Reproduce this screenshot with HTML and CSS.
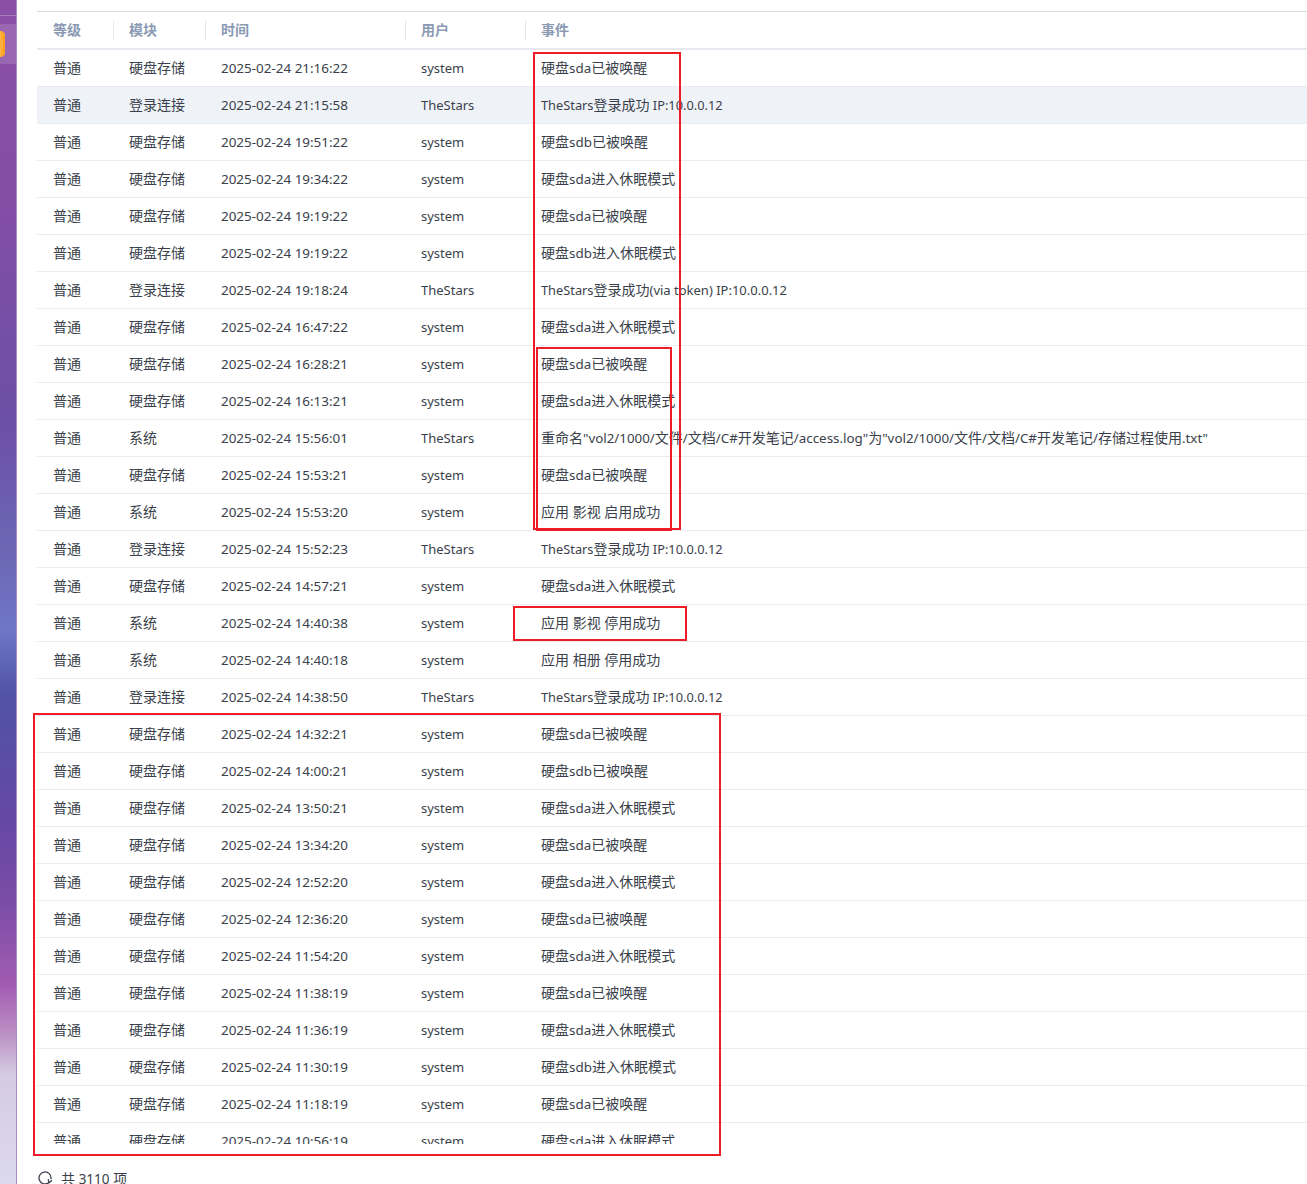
FILE: index.html
```html
<!DOCTYPE html>
<html lang="zh-CN">
<head>
<meta charset="utf-8">
<title>日志</title>
<link rel="stylesheet" href="styles.css">
</head>
<body>
<div class="page">
  <aside class="sidebar">
    <div class="side-line"></div>
    <div class="side-active"><span class="app-icon"></span></div>
  </aside>
  <main class="content">
    <div class="table-wrap">
      <table class="log-table">
        <colgroup><col class="c1"><col class="c2"><col class="c3"><col class="c4"><col></colgroup>
        <thead>
          <tr><th><span class="th-in">等级</span></th><th><span class="th-in">模块</span></th><th><span class="th-in">时间</span></th><th><span class="th-in">用户</span></th><th><span class="th-in">事件</span></th></tr>
        </thead>
        <tbody>
          <tr><td>普通</td><td>硬盘存储</td><td class="time">2025-02-24 21:16:22</td><td class="user">system</td><td>硬盘<span class="dev">sda</span>已被唤醒</td></tr>
          <tr class="hover"><td>普通</td><td>登录连接</td><td class="time">2025-02-24 21:15:58</td><td class="user">TheStars</td><td><span class="lat">TheStars</span>登录成功<span class="lat"> IP:10.0.0.12</span></td></tr>
          <tr><td>普通</td><td>硬盘存储</td><td class="time">2025-02-24 19:51:22</td><td class="user">system</td><td>硬盘<span class="dev">sdb</span>已被唤醒</td></tr>
          <tr><td>普通</td><td>硬盘存储</td><td class="time">2025-02-24 19:34:22</td><td class="user">system</td><td>硬盘<span class="dev">sda</span>进入休眠模式</td></tr>
          <tr><td>普通</td><td>硬盘存储</td><td class="time">2025-02-24 19:19:22</td><td class="user">system</td><td>硬盘<span class="dev">sda</span>已被唤醒</td></tr>
          <tr><td>普通</td><td>硬盘存储</td><td class="time">2025-02-24 19:19:22</td><td class="user">system</td><td>硬盘<span class="dev">sdb</span>进入休眠模式</td></tr>
          <tr><td>普通</td><td>登录连接</td><td class="time">2025-02-24 19:18:24</td><td class="user">TheStars</td><td><span class="lat">TheStars</span>登录成功<span class="via">(via token) IP:10.0.0.12</span></td></tr>
          <tr><td>普通</td><td>硬盘存储</td><td class="time">2025-02-24 16:47:22</td><td class="user">system</td><td>硬盘<span class="dev">sda</span>进入休眠模式</td></tr>
          <tr><td>普通</td><td>硬盘存储</td><td class="time">2025-02-24 16:28:21</td><td class="user">system</td><td>硬盘<span class="dev">sda</span>已被唤醒</td></tr>
          <tr><td>普通</td><td>硬盘存储</td><td class="time">2025-02-24 16:13:21</td><td class="user">system</td><td>硬盘<span class="dev">sda</span>进入休眠模式</td></tr>
          <tr><td>普通</td><td>系统</td><td class="time">2025-02-24 15:56:01</td><td class="user">TheStars</td><td>重命名<span class="path">"vol2/1000/</span>文件<span class="path">/</span>文档<span class="path">/C#</span>开发笔记<span class="path">/access.log"</span>为<span class="path">"vol2/1000/</span>文件<span class="path">/</span>文档<span class="path">/C#</span>开发笔记<span class="path">/</span>存储过程使用<span class="path">.txt"</span></td></tr>
          <tr><td>普通</td><td>硬盘存储</td><td class="time">2025-02-24 15:53:21</td><td class="user">system</td><td>硬盘<span class="dev">sda</span>已被唤醒</td></tr>
          <tr><td>普通</td><td>系统</td><td class="time">2025-02-24 15:53:20</td><td class="user">system</td><td>应用 影视 启用成功</td></tr>
          <tr><td>普通</td><td>登录连接</td><td class="time">2025-02-24 15:52:23</td><td class="user">TheStars</td><td><span class="lat">TheStars</span>登录成功<span class="lat"> IP:10.0.0.12</span></td></tr>
          <tr><td>普通</td><td>硬盘存储</td><td class="time">2025-02-24 14:57:21</td><td class="user">system</td><td>硬盘<span class="dev">sda</span>进入休眠模式</td></tr>
          <tr><td>普通</td><td>系统</td><td class="time">2025-02-24 14:40:38</td><td class="user">system</td><td>应用 影视 停用成功</td></tr>
          <tr><td>普通</td><td>系统</td><td class="time">2025-02-24 14:40:18</td><td class="user">system</td><td>应用 相册 停用成功</td></tr>
          <tr><td>普通</td><td>登录连接</td><td class="time">2025-02-24 14:38:50</td><td class="user">TheStars</td><td><span class="lat">TheStars</span>登录成功<span class="lat"> IP:10.0.0.12</span></td></tr>
          <tr><td>普通</td><td>硬盘存储</td><td class="time">2025-02-24 14:32:21</td><td class="user">system</td><td>硬盘<span class="dev">sda</span>已被唤醒</td></tr>
          <tr><td>普通</td><td>硬盘存储</td><td class="time">2025-02-24 14:00:21</td><td class="user">system</td><td>硬盘<span class="dev">sdb</span>已被唤醒</td></tr>
          <tr><td>普通</td><td>硬盘存储</td><td class="time">2025-02-24 13:50:21</td><td class="user">system</td><td>硬盘<span class="dev">sda</span>进入休眠模式</td></tr>
          <tr><td>普通</td><td>硬盘存储</td><td class="time">2025-02-24 13:34:20</td><td class="user">system</td><td>硬盘<span class="dev">sda</span>已被唤醒</td></tr>
          <tr><td>普通</td><td>硬盘存储</td><td class="time">2025-02-24 12:52:20</td><td class="user">system</td><td>硬盘<span class="dev">sda</span>进入休眠模式</td></tr>
          <tr><td>普通</td><td>硬盘存储</td><td class="time">2025-02-24 12:36:20</td><td class="user">system</td><td>硬盘<span class="dev">sda</span>已被唤醒</td></tr>
          <tr><td>普通</td><td>硬盘存储</td><td class="time">2025-02-24 11:54:20</td><td class="user">system</td><td>硬盘<span class="dev">sda</span>进入休眠模式</td></tr>
          <tr><td>普通</td><td>硬盘存储</td><td class="time">2025-02-24 11:38:19</td><td class="user">system</td><td>硬盘<span class="dev">sda</span>已被唤醒</td></tr>
          <tr><td>普通</td><td>硬盘存储</td><td class="time">2025-02-24 11:36:19</td><td class="user">system</td><td>硬盘<span class="dev">sda</span>进入休眠模式</td></tr>
          <tr><td>普通</td><td>硬盘存储</td><td class="time">2025-02-24 11:30:19</td><td class="user">system</td><td>硬盘<span class="dev">sdb</span>进入休眠模式</td></tr>
          <tr><td>普通</td><td>硬盘存储</td><td class="time">2025-02-24 11:18:19</td><td class="user">system</td><td>硬盘<span class="dev">sda</span>已被唤醒</td></tr>
          <tr><td>普通</td><td>硬盘存储</td><td class="time">2025-02-24 10:56:19</td><td class="user">system</td><td>硬盘<span class="dev">sda</span>进入休眠模式</td></tr>
        </tbody>
      </table>
    </div>
    <footer class="table-footer">
      <svg class="refresh" viewBox="0 0 14 14" width="14" height="14" aria-hidden="true"><path d="M13 7.6A6 6 0 1 0 10.6 11.8" fill="none" stroke="#3c4250" stroke-width="1.3" stroke-linecap="round"/><path d="M13.6 9.4l-2.7 2.5-.6-3.2" fill="none" stroke="#3c4250" stroke-width="1.3" stroke-linecap="round" stroke-linejoin="round"/></svg>
      <span>共 <span class="num">3110</span> 项</span>
    </footer>
  </main>
  <div class="mark mark-a"></div>
  <div class="mark mark-b"></div>
  <div class="mark mark-c"></div>
  <div class="mark mark-d"></div>
</div>
</body>
</html>
```

FILE: styles.css
```css
* { box-sizing: border-box; }
html, body { margin: 0; height: 100%; overflow: hidden; background: #fff; }
body {
  font-family: "Noto Sans", "Noto Sans CJK SC", sans-serif;
  font-size: 14px;
  color: #3a3f4b;
}
.page { position: relative; display: flex; height: 1184px; width: 1307px; overflow: hidden; }
.sidebar {
  flex: 0 0 17px;
  padding-top: 15px;
  border-right: 1px solid #a98cc2;
  background: linear-gradient(180deg,
    #8b4fa6 0, #844ea5 200px, #6c4fa6 420px, #6c68b6 560px, #6f76c6 630px,
    #5052a8 695px, #6548a4 820px, #7a4ca6 900px, #a25cb2 985px, #b98cc2 1030px,
    #d5cbe3 1075px, #dcd9ec 1184px);
}
.side-line { height: 1px; background: rgba(255, 255, 255, .25); }
.side-active {
  display: flex;
  align-items: center;
  height: 40px;
  margin-top: 8px;
  overflow: hidden;
  background: rgba(255, 255, 255, .14);
}
.app-icon {
  flex: none;
  width: 14px;
  height: 26px;
  margin-left: -9px;
  border-radius: 5px;
  background: #ffb13b;
  box-shadow: inset -2px 0 0 #ff9d1c, inset 0 0 0 1px #ffd27d;
}
.content {
  flex: 1;
  min-width: 0;
  display: flex;
  flex-direction: column;
  padding: 11px 0 0 20px;
}
.table-wrap { flex: none; height: 1133px; overflow: hidden; }
.log-table {
  width: 100%;
  table-layout: fixed;
  border-collapse: separate;
  border-spacing: 0;
}
.c1 { width: 76px; }
.c2 { width: 92px; }
.c3 { width: 200px; }
.c4 { width: 120px; }
th {
  height: 39px;
  padding: 0;
  text-align: left;
  font-weight: 700;
  color: #8a9ab3;
  border-top: 1px solid #d5dbe4;
  border-bottom: 2px solid #e6eaf0;
}
.th-in { display: block; height: 20px; padding-left: 15px; line-height: 20px; border-left: 1px solid #e6eaf0; }
th:first-child .th-in { padding-left: 16px; border-left: 0; }
td {
  height: 37px;
  padding: 0 0 2px 16px;
  white-space: nowrap;
  color: #3a3f4b;
  border-bottom: 1px solid #e8ecf2;
}
.hover td { background: #eff3f8; }
td.time { padding-bottom: 0; font-size: 13.45px; }
td.user { padding-bottom: 0; font-size: 13px; }
.lat { font-size: 12.8px; }
.via { font-size: 13px; }
.dev { font-size: 13.4px; }
.path { font-size: 13.35px; }
.num { font-size: 13.5px; }
.table-footer {
  flex: none;
  display: flex;
  align-items: center;
  gap: 9px;
  height: 20px;
  margin-top: 24px;
  padding-left: 1px;
  color: #3a3f4b;
}
.refresh { flex: none; }
.mark { position: absolute; border: 2px solid #ee1c25; pointer-events: none; }
.mark-a { left: 533px; top: 52px; width: 148px; height: 478px; }
.mark-b { left: 536px; top: 347px; width: 136px; height: 184px; }
.mark-c { left: 513px; top: 606px; width: 174px; height: 35px; }
.mark-d { left: 33px; top: 713px; width: 688px; height: 443px; }
```
